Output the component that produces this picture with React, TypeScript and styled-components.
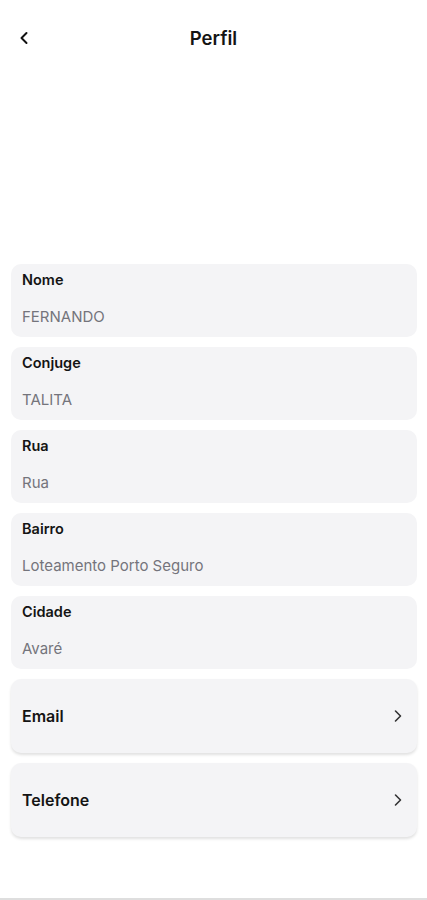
import styled, { createGlobalStyle } from 'styled-components';

const GlobalStyle = createGlobalStyle`
* { box-sizing: border-box; }
body {
    margin: 0;
    font-family: Inter, "Noto Sans", sans-serif;
    background: #fff;
    color: #141414;
}
`;

const Screen = styled.div`
min-height: 900px;
display: flex;
flex-direction: column;
border-bottom: 2px solid #dedede;
`;

const Header = styled.header`
height: 76px;
display: grid;
grid-template-columns: 48px 1fr 48px;
align-items: center;
`;

const BackButton = styled.button`
border: none;
background: none;
padding: 0 0 0 19px;
height: 100%;
display: flex;
align-items: center;
cursor: pointer;
color: #111;
`;

const Title = styled.h1`
margin: 0;
text-align: center;
font-size: 18.5px;
font-weight: 600;
line-height: 22px;
`;

const AvatarArea = styled.div`
height: 188px;
`;

const List = styled.div`
display: flex;
flex-direction: column;
gap: 10px;
padding: 0 10px 0 11px;
`;

const InfoCard = styled.div`
background: #f4f4f6;
border-radius: 10px;
padding: 7px 11px 11px;
display: flex;
flex-direction: column;
`;

const Label = styled.span`
font-size: 14.5px;
font-weight: 600;
line-height: 18px;
color: #141414;
`;

const Value = styled.span`
margin-top: 19px;
font-size: 15px;
line-height: 18px;
color: #74747c;
`;

const LinkCard = styled.button`
border: none;
width: 100%;
height: 74px;
background: #f4f4f6;
border-radius: 10px;
box-shadow: 0 2px 3px rgba(0, 0, 0, 0.12);
display: flex;
align-items: center;
justify-content: space-between;
padding: 0 14px 0 11px;
font-family: inherit;
font-size: 16px;
font-weight: 600;
color: #141414;
cursor: pointer;
`;

const Chevron = ({ dir }: { dir: 'left' | 'right' }) => (
    <svg width="10" height="14" viewBox="0 0 10 14" fill="none">
        <path
            d={dir === 'left' ? 'M7.5 2 L2.5 7 L7.5 12' : 'M2.5 2 L7.5 7 L2.5 12'}
            stroke={dir === 'left' ? '#111' : '#333'}
            strokeWidth={dir === 'left' ? 2 : 1.6}
            strokeLinecap="round"
            strokeLinejoin="round"
        />
    </svg>
);

const fields = [
    { label: 'Nome', value: 'FERNANDO' },
    { label: 'Conjuge', value: 'TALITA' },
    { label: 'Rua', value: 'Rua' },
    { label: 'Bairro', value: 'Loteamento Porto Seguro' },
    { label: 'Cidade', value: 'Avaré' },
];

const links = ['Email', 'Telefone'];

const App = () => {
    return (
        <>
            <GlobalStyle />
            <Screen>
                <Header>
                    <BackButton aria-label="Voltar">
                        <Chevron dir="left" />
                    </BackButton>
                    <Title>Perfil</Title>
                    <span />
                </Header>
                <AvatarArea />
                <List>
                    {fields.map(f => (
                        <InfoCard key={f.label}>
                            <Label>{f.label}</Label>
                            <Value>{f.value}</Value>
                        </InfoCard>
                    ))}
                    {links.map(l => (
                        <LinkCard key={l}>
                            {l}
                            <Chevron dir="right" />
                        </LinkCard>
                    ))}
                </List>
            </Screen>
        </>
    );
}

export default App;
